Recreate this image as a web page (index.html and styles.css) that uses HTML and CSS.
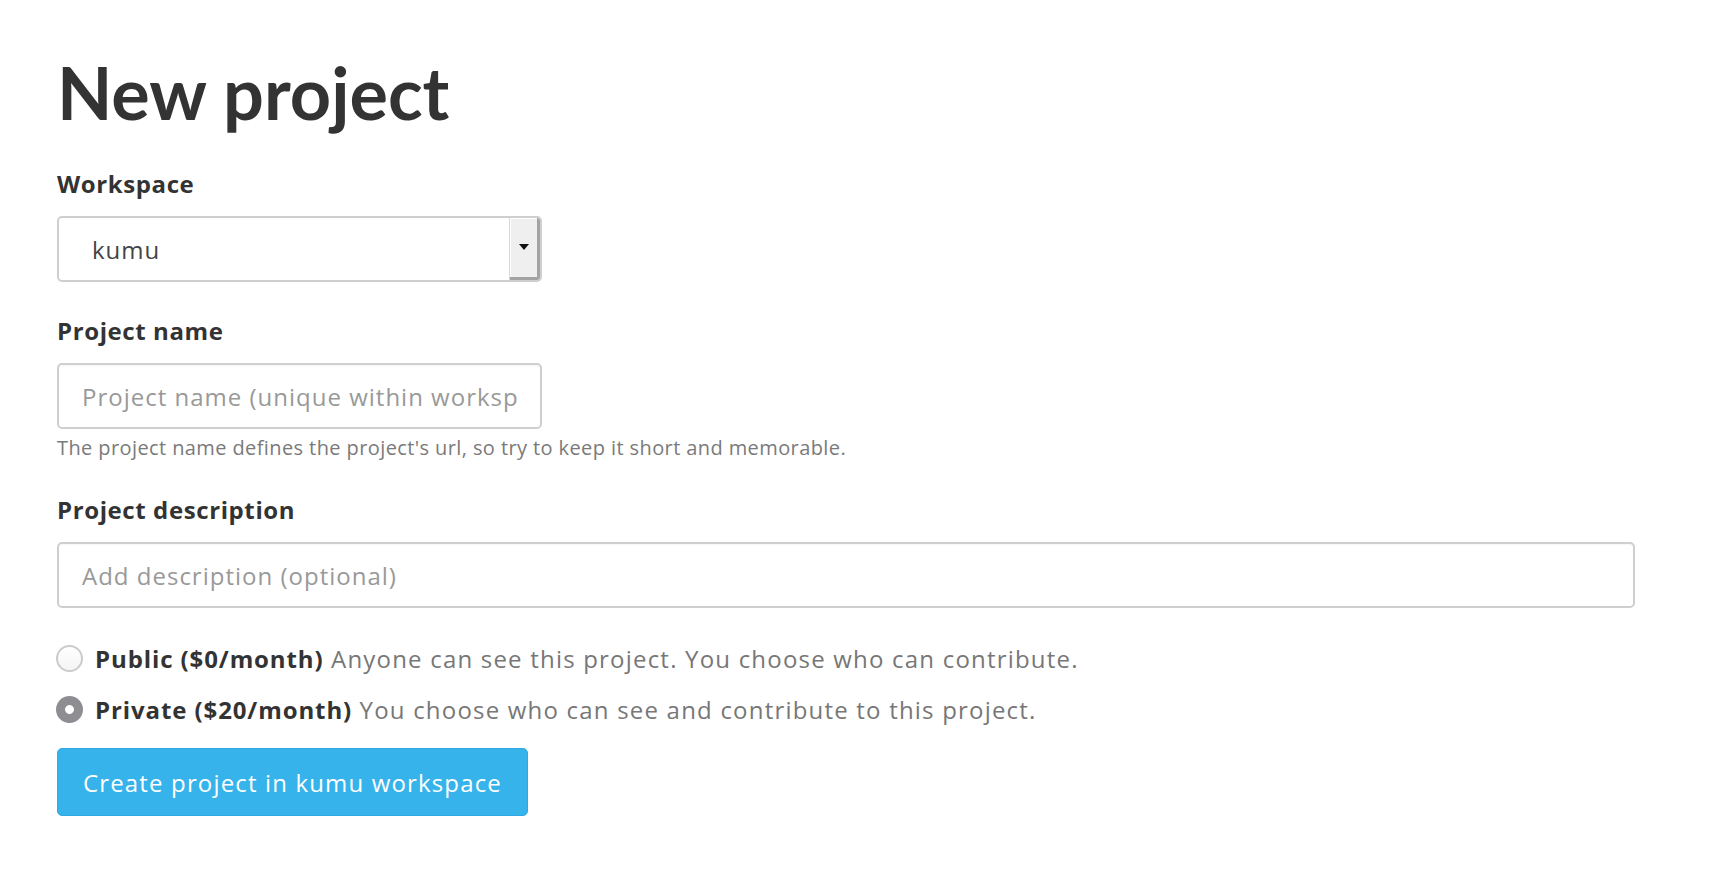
FILE: index.html
```html
<!DOCTYPE html>
<html>
<head>
<meta charset="utf-8">
<link rel="stylesheet" href="styles.css">
</head>
<body>
<main class="page">
  <h1 class="title">New project</h1>

  <label class="label label-first">Workspace</label>
  <div class="select">
    <span class="select-value">kumu</span>
    <span class="select-btn"><span class="select-arrow"></span></span>
  </div>

  <label class="label label-next">Project name</label>
  <div class="input input-short"><span class="placeholder">Project name (unique within worksp</span></div>
  <p class="help">The project name defines the project's url, so try to keep it short and memorable.</p>

  <label class="label label-desc">Project description</label>
  <div class="input input-wide"><span class="placeholder">Add description (optional)</span></div>

  <div class="radios">
    <div class="radio-row">
      <span class="radio"></span>
      <span class="radio-text"><b>Public ($0/month)</b> Anyone can see this project. You choose who can contribute.</span>
    </div>
    <div class="radio-row">
      <span class="radio radio-checked"></span>
      <span class="radio-text"><b>Private ($20/month)</b> You choose who can see and contribute to this project.</span>
    </div>
  </div>

  <button class="btn">Create project in kumu workspace</button>
</main>
</body>
</html>
```

FILE: styles.css
```css
html, body {
  margin: 0;
  padding: 0;
  background: #fff;
}
body {
  font-family: "Open Sans", Lato, sans-serif;
  color: #333;
}
.page {
  padding: 56px 0 0 57px;
  width: 1578px;
}
.title {
  margin: 0;
  font-family: Lato, "Open Sans", sans-serif;
  font-size: 72px;
  line-height: 72px;
  font-weight: 700;
  color: #333;
}
.label {
  display: block;
  font-size: 24px;
  line-height: 24px;
  letter-spacing: 0.6px;
  font-weight: 700;
  color: #333;
}
.label-first { margin-top: 44px; }
.label-next { margin-top: 37px; }
.label-desc { margin-top: 38px; }

.select {
  margin-top: 20px;
  width: 485px;
  height: 66px;
  box-sizing: border-box;
  border: 2px solid #cfcfcf;
  border-radius: 5px;
  display: flex;
  align-items: stretch;
  background: #fff;
  overflow: hidden;
}
.select-value {
  flex: 1;
  display: flex;
  align-items: center;
  padding-left: 33px;
  font-size: 24px;
  letter-spacing: 1px;
  color: #444;
}
.select-btn {
  width: 28px;
  background: #efefef;
  border-left: 1px solid #d6d6d6;
  box-shadow: inset -3px -3px 0 #a3a3a3, inset 1px 1px 0 #fff;
  display: flex;
  align-items: center;
  justify-content: center;
  padding-right: 2px;
}
.select-arrow {
  width: 0;
  height: 0;
  border-left: 5px solid transparent;
  border-right: 5px solid transparent;
  border-top: 6px solid #111;
  margin-bottom: 4px;
}

.input {
  margin-top: 20px;
  height: 66px;
  box-sizing: border-box;
  border: 2px solid #cfcfcf;
  border-radius: 5px;
  display: flex;
  align-items: center;
  padding-left: 23px;
  overflow: hidden;
  white-space: nowrap;
  box-shadow: inset 0 1px 2px rgba(0,0,0,0.04);
}
.input-short { width: 485px; }
.input-wide { width: 1578px; }
.placeholder {
  font-size: 24px;
  letter-spacing: 1px;
  color: #999;
}
.help {
  margin: 7px 0 0;
  font-size: 20px;
  line-height: 24px;
  letter-spacing: 0.4px;
  color: #7a7a7a;
}

.radios {
  margin-top: 37px;
  display: flex;
  flex-direction: column;
  gap: 24px;
}
.radio-row {
  display: flex;
  align-items: center;
  gap: 12px;
  height: 27px;
}
.radio {
  width: 27px;
  height: 27px;
  box-sizing: border-box;
  border-radius: 50%;
  border: 2px solid #cbcbcb;
  background: linear-gradient(#fff, #f4f4f4);
  margin-left: -1px;
  flex: none;
}
.radio-checked {
  border: none;
  background: radial-gradient(circle, #fff 0 4px, #8d8d92 4.8px);
}
.radio-text {
  font-size: 24px;
  letter-spacing: 1.2px;
  color: #777;
  white-space: nowrap;
}
.radio-text b {
  color: #333;
  font-weight: 700;
  letter-spacing: 0.9px;
}

.btn {
  display: block;
  margin-top: 25px;
  width: 471px;
  height: 68px;
  box-sizing: border-box;
  border: 1px solid #2ea9e2;
  border-radius: 5px;
  background: #36b3ea;
  color: #fff;
  font-family: "Open Sans", Lato, sans-serif;
  font-size: 24px;
  letter-spacing: 1.15px;
  text-align: left;
  padding: 0 0 0 25px;
  cursor: pointer;
}
```
